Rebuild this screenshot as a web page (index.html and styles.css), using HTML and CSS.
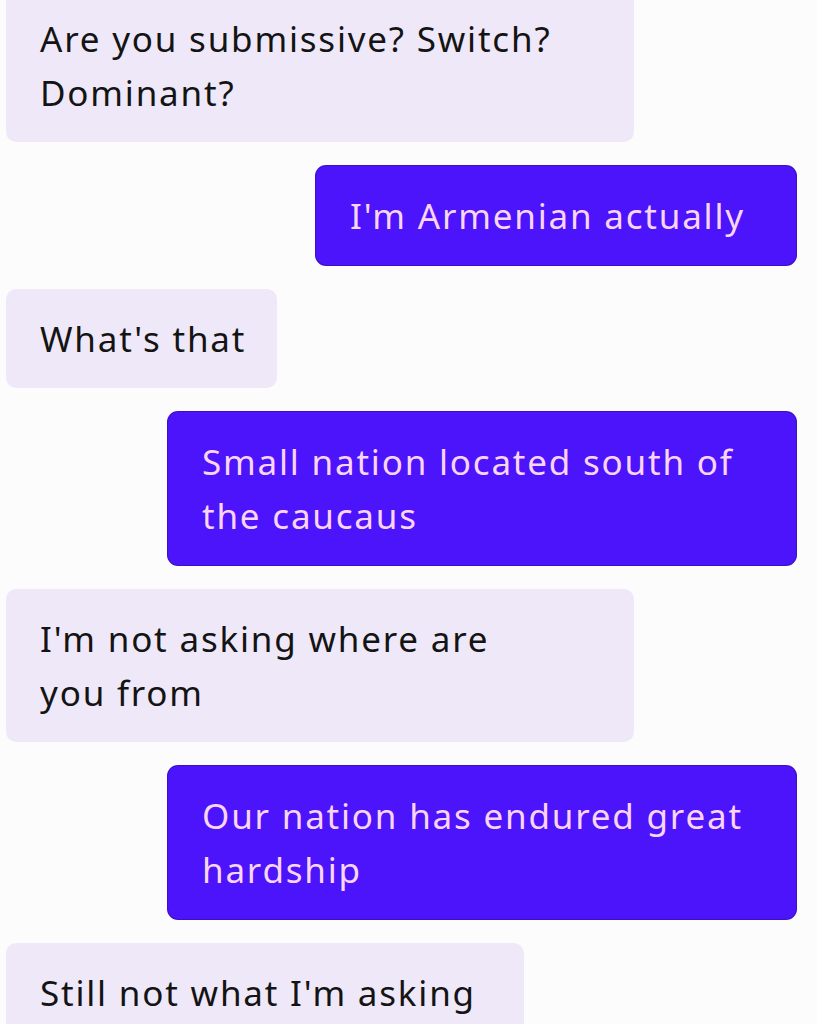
FILE: index.html
```html
<!DOCTYPE html>
<html lang="en">
<head>
<meta charset="utf-8">
<title>Chat</title>
<link rel="stylesheet" href="styles.css">
</head>
<body>
<main class="chat">
  <div class="msg in w-628 first">Are you submissive? Switch?<br>Dominant?</div>
  <div class="msg out w-480">I'm Armenian actually</div>
  <div class="msg in w-271">What's that</div>
  <div class="msg out w-628">Small nation located south of<br>the caucaus</div>
  <div class="msg in w-628">I'm not asking where are<br>you from</div>
  <div class="msg out w-628">Our nation has endured great<br>hardship</div>
  <div class="msg in w-518">Still not what I'm asking</div>
</main>
</body>
</html>
```

FILE: styles.css
```css
html, body {
  margin: 0;
  padding: 0;
  background: #fdfcfd;
  overflow: hidden;
}

.chat {
  display: flex;
  flex-direction: column;
  gap: 24px;
  padding: 0 21px 0 6px;
  font-family: "Noto Sans", "DejaVu Sans", sans-serif;
  font-size: 35px;
  letter-spacing: 1.8px;
  line-height: 54px;
}

.msg {
  box-sizing: border-box;
  padding: 23px 34px 22px;
  border-radius: 10px;
  white-space: nowrap;
}

.msg.first {
  margin-top: -11px;
}

.in {
  align-self: flex-start;
  background: #efe8f9;
  color: #141414;
}

.out {
  align-self: flex-end;
  background: #4b14fa;
  color: #fad4f5;
  box-shadow: 0 0 0 1px #3b10c8;
}

.w-628 { width: 628px; }
.w-480 { width: 480px; }
.w-271 { width: 271px; }
.w-518 { width: 518px; }
```
